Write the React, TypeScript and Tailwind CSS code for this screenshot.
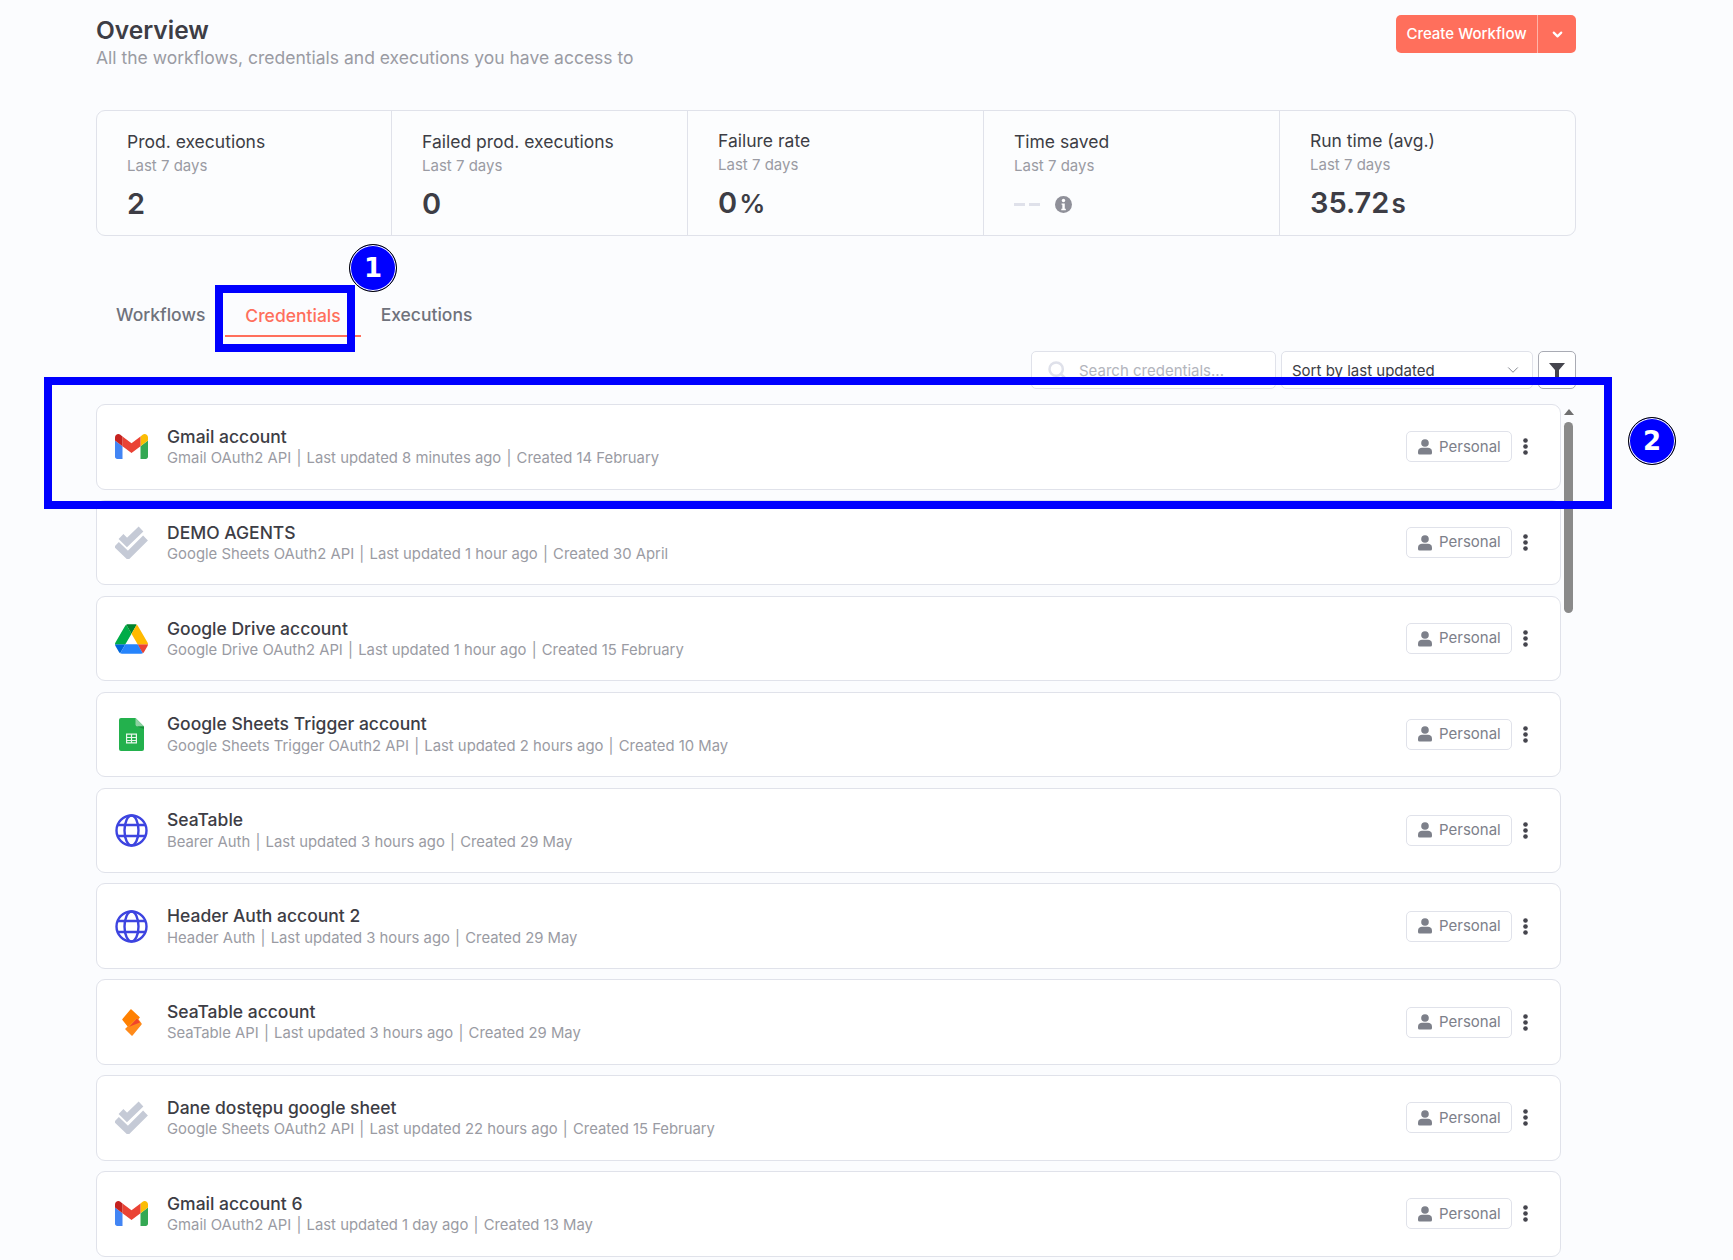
import { ChevronDown, Search } from "lucide-react";

const stats = [
    { label: "Prod. executions", value: "2" },
    { label: "Failed prod. executions", value: "0" },
    { label: "Failure rate", value: "0", unit: "%" },
    { label: "Time saved", value: "" },
    { label: "Run time (avg.)", value: "35.72", unit: "s" },
];

const credentials = [
    { name: "Gmail account", icon: "gmail", meta: "Gmail OAuth2 API", updated: "Last updated 8 minutes ago", created: "Created 14 February" },
    { name: "DEMO AGENTS", icon: "check", meta: "Google Sheets OAuth2 API", updated: "Last updated 1 hour ago", created: "Created 30 April" },
    { name: "Google Drive account", icon: "drive", meta: "Google Drive OAuth2 API", updated: "Last updated 1 hour ago", created: "Created 15 February" },
    { name: "Google Sheets Trigger account", icon: "sheets", meta: "Google Sheets Trigger OAuth2 API", updated: "Last updated 2 hours ago", created: "Created 10 May" },
    { name: "SeaTable", icon: "globe", meta: "Bearer Auth", updated: "Last updated 3 hours ago", created: "Created 29 May" },
    { name: "Header Auth account 2", icon: "globe", meta: "Header Auth", updated: "Last updated 3 hours ago", created: "Created 29 May" },
    { name: "SeaTable account", icon: "seatable", meta: "SeaTable API", updated: "Last updated 3 hours ago", created: "Created 29 May" },
    { name: "Dane dostępu google sheet", icon: "check", meta: "Google Sheets OAuth2 API", updated: "Last updated 22 hours ago", created: "Created 15 February" },
    { name: "Gmail account 6", icon: "gmail", meta: "Gmail OAuth2 API", updated: "Last updated 1 day ago", created: "Created 13 May" },
];

function CredentialIcon({ type }: { type: string }) {
    if (type === "gmail") {
        return (
            <svg viewBox="52 42 88 66" className="w-[33px] h-[25px]">
                <path fill="#4285f4" d="M58 108h14V74L52 59v43c0 3.32 2.69 6 6 6" />
                <path fill="#34a853" d="M120 108h14c3.32 0 6-2.69 6-6V59l-20 15" />
                <path fill="#fbbc04" d="M120 48v26l20-15v-8c0-7.42-8.47-11.65-14.4-7.2" />
                <path fill="#ea4335" d="M72 74V48l24 18 24-18v26L96 92" />
                <path fill="#c5221f" d="M52 51v8l20 15V48l-5.6-4.2c-5.94-4.45-14.4-.22-14.4 7.2" />
            </svg>
        );
    }
    if (type === "drive") {
        return (
            <svg viewBox="0 0 87.3 78" className="w-[33px] h-[30px]">
                <path d="m6.6 66.85 3.85 6.65c.8 1.4 1.95 2.5 3.3 3.3l13.75-23.8h-27.5c0 1.55.4 3.1 1.2 4.5z" fill="#0066da" />
                <path d="m43.65 25-13.75-23.8c-1.35.8-2.5 1.9-3.3 3.3l-25.4 44a9.06 9.06 0 0 0 -1.2 4.5h27.5z" fill="#00ac47" />
                <path d="m73.55 76.8c1.35-.8 2.5-1.9 3.3-3.3l1.6-2.75 7.65-13.25c.8-1.4 1.2-2.95 1.2-4.5h-27.502l5.852 11.5z" fill="#ea4335" />
                <path d="m43.65 25 13.75-23.8c-1.35-.8-2.9-1.2-4.5-1.2h-18.5c-1.6 0-3.15.45-4.5 1.2z" fill="#00832d" />
                <path d="m59.8 53h-32.3l-13.75 23.8c1.35.8 2.9 1.2 4.5 1.2h50.8c1.6 0 3.15-.45 4.5-1.2z" fill="#2684fc" />
                <path d="m73.4 26.5-12.7-22c-.8-1.4-1.95-2.5-3.3-3.3l-13.75 23.8 16.15 28h27.45c0-1.55-.4-3.1-1.2-4.5z" fill="#ffba00" />
            </svg>
        );
    }
    if (type === "sheets") {
        return (
            <svg viewBox="0 0 25 33" className="w-[25px] h-[33px]">
                <path fill="#23b14d" d="M2 0h14.5L25 8.5V31a2 2 0 0 1-2 2H2a2 2 0 0 1-2-2V2a2 2 0 0 1 2-2z" />
                <path fill="#8ed1a2" d="M16.5 0 25 8.5h-6.5a2 2 0 0 1-2-2z" />
                <path fill="#16903a" d="M18 8.5 25 11V8.5z" />
                <path fill="#e8f6ec" fillRule="evenodd" d="M7 15.5h11v10H7zM8.2 16.8v2.2h3.7v-2.2zm4.9 0v2.2h3.7v-2.2zm-4.9 3.3v1.9h3.7v-1.9zm4.9 0v1.9h3.7v-1.9zm-4.9 3v1.2h3.7v-1.2zm4.9 0v1.2h3.7v-1.2z" />
            </svg>
        );
    }
    if (type === "globe") {
        return (
            <svg viewBox="0 0 33 33" className="w-[33px] h-[33px]" fill="none" stroke="#3d44e0" strokeWidth="2.4">
                <circle cx="16.5" cy="16.5" r="15" />
                <ellipse cx="16.5" cy="16.5" rx="7" ry="15" />
                <path d="M2.5 11h28M2.5 22h28" />
            </svg>
        );
    }
    if (type === "seatable") {
        return (
            <svg viewBox="0 0 20 27" className="w-[20px] h-[27px]" strokeLinejoin="round">
                <path fill="#ff8000" stroke="#ff8000" strokeWidth="1.5" d="M9 1 17 8.5 7 18 1 10.5z" />
                <path fill="#ff8a1a" stroke="#ff8a1a" strokeWidth="1.5" d="M15 9.5 19 15 10 26 4 20z" />
                <path fill="#f0452b" d="M7 18 15 9.5 18 13.5 9 17z" />
            </svg>
        );
    }
    return (
        <svg viewBox="0 0 33 33" className="w-[33px] h-[33px]" fill="none" stroke="#c5cad6" strokeWidth="6.8">
            <path d="M6 10.5 12 16.5 26 3" />
            <path d="M1.5 18.5 13 29.5 30.5 12" />
        </svg>
    );
}

function Badge({ n, className }: { n: number; className: string }) {
    return (
        <div className={"absolute flex w-12 h-12 pt-[1px] items-center justify-center rounded-full bg-[#0000ff] border border-black shadow-[inset_0_0_0_1px_#ffffff] text-white text-[26px] font-bold font-['DejaVu_Sans',sans-serif] " + className}>
            {n}
        </div>
    );
}

export default function App() {
    return (
        <div className="relative h-[1260px] overflow-hidden bg-[#fbfcfe] font-['Inter',sans-serif]">
            <div className="w-[1480px] ml-[96px] pt-[15px]">
                <div className="flex justify-between h-[95px]">
                    <div>
                        <h1 className="text-[24.5px] leading-[30px] font-semibold text-[#3d3d45]">Overview</h1>
                        <p className="text-[17.5px] leading-[28px] text-[#9a9ba3] -mt-[1px]">All the workflows, credentials and executions you have access to</p>
                    </div>
                    <div className="flex h-[38px] w-[180px] rounded-[5px] bg-[#ff6f5c] text-white">
                        <span className="flex w-[142px] items-center justify-center text-[15px] font-medium border-r border-[#ffb3a8]">Create Workflow</span>
                        <span className="flex flex-1 items-center justify-center">
                            <ChevronDown size={15} strokeWidth={3.5} />
                        </span>
                    </div>
                </div>

                <div className="grid grid-cols-[295px_296px_296px_296px_1fr] h-[126px] rounded-[9px] border border-[#e0e2ea] bg-[#fcfdfe]">
                    {stats.map((s, i) => (
                        <div key={s.label} className={(i === 2 || i === 4 ? "pt-[18px]" : "pt-[19px]") + (i === 4 ? " pl-[30px]" : " pl-[30px] border-r border-[#e0e2ea]")}>
                            <div className="text-[17.5px] leading-[24px] text-[#3d3d45]">{s.label}</div>
                            <div className="text-[15px] leading-[20px] mt-[2px] text-[#9a9ba3]">Last 7 days</div>
                            {s.value ? (
                                <div className="mt-[9px] text-[29px] leading-[38px] font-semibold text-[#3d3d45]">
                                    {s.value}
                                    {s.unit && <span className="ml-[2px] text-[26px]">{s.unit}</span>}
                                </div>
                            ) : (
                                <div className="mt-[9px] h-[38px] flex items-center">
                                    <span className="w-[11px] h-[3px] bg-[#dfe1ea]" />
                                    <span className="ml-[4px] w-[11px] h-[3px] bg-[#dfe1ea]" />
                                    <svg viewBox="0 0 16 16" className="ml-[15px] w-[17px] h-[17px]">
                                        <circle cx="8" cy="8" r="8" fill="#8f9099" />
                                        <circle cx="8" cy="4.3" r="1.6" fill="#fff" />
                                        <path d="M6.2 7h3v5H10.2v1.3H5.9V12h1V8.3H6.2z" fill="#fff" />
                                    </svg>
                                </div>
                            )}
                        </div>
                    ))}
                </div>

                <div className="flex mt-[64px] h-[37px] text-[17.5px] font-medium text-[#6f727c]">
                    <span className="px-[20px] leading-[30px]">Workflows</span>
                    <span className="px-[20px] leading-[32px] h-[37px] border-b-2 border-[#ff6f5c] text-[#ff6f5c]">Credentials</span>
                    <span className="px-[20px] leading-[30px]">Executions</span>
                </div>

                <div className="flex justify-end mt-[14px] h-[38px] gap-[6px]">
                    <div className="flex items-center w-[245px] rounded-[5px] border border-[#e0e2ea] bg-white pl-[15px]">
                        <Search size={20} className="text-[#dfe1ea]" strokeWidth={3} />
                        <span className="ml-[12px] pt-[3px] text-[15px] text-[#b3b5bd]">Search credentials...</span>
                    </div>
                    <div className="flex items-center justify-between -ml-[1px] w-[252px] rounded-[5px] border border-[#e0e2ea] bg-white px-[10px]">
                        <span className="pt-[3px] text-[15px] text-[#3d3d45]">Sort by last updated</span>
                        <ChevronDown size={18} strokeWidth={1.2} className="text-[#777a84]" />
                    </div>
                    <div className="flex items-center justify-center -ml-[1px] w-[38px] rounded-[5px] border border-[#a9abb4] bg-white">
                        <svg viewBox="0 0 16 16" className="w-[16px] h-[16px]" fill="#45454d">
                            <path d="M0 1h16L10 8v8H6V8z" />
                        </svg>
                    </div>
                </div>

                <div className="flex mt-[15px]">
                    <div className="flex flex-col w-[1465px] gap-[10.4px]">
                        {credentials.map((c, i) => (
                            <div key={i} className="flex items-center h-[85.5px] shrink-0 rounded-[9px] border border-[#e0e2ea] bg-white pl-[18px] pr-[32px]">
                                <div className="flex w-[33px] justify-center">
                                    <CredentialIcon type={c.icon} />
                                </div>
                                <div className="ml-[19px] flex-1 pt-[1.4px]">
                                    <div className="text-[17.5px] leading-[21px] font-medium text-[#3d3d45]">{c.name}</div>
                                    <div className="mt-[0.3px] text-[14.85px] leading-[22px] text-[#9a9ba3]">
                                        {c.meta} <span className="mx-[1px]">|</span> {c.updated} <span className="mx-[1px]">|</span> {c.created}
                                    </div>
                                </div>
                                <div className="flex items-center h-[31px] w-[106px] rounded-[5px] border border-[#e0e2ea] pl-[11px] text-[15px] text-[#7d808a]">
                                    <svg viewBox="0 0 14 16" className="w-[14px] h-[16px]" fill="#7d808a">
                                        <circle cx="7" cy="4" r="3.8" />
                                        <path d="M0 14v-1.5C0 10 2 8.8 4 8.8h6c2 0 4 1.2 4 3.7V14a1.6 1.6 0 0 1-1.6 1.6H1.6A1.6 1.6 0 0 1 0 14z" />
                                    </svg>
                                    <span className="ml-[7px]">Personal</span>
                                </div>
                                <svg viewBox="0 0 5 17" className="ml-[11px] w-[5px] h-[17px]" fill="#45454d">
                                    <circle cx="2.5" cy="2.5" r="2.3" />
                                    <circle cx="2.5" cy="8.5" r="2.3" />
                                    <circle cx="2.5" cy="14.5" r="2.3" />
                                </svg>
                            </div>
                        ))}
                    </div>
                    <div className="flex flex-col items-center w-[15px] pt-[5px]">
                        <svg viewBox="0 0 10 6" className="w-[10px] h-[6px]" fill="#6f6f6f">
                            <path d="M5 0l5 6H0z" />
                        </svg>
                        <div className="mt-[7px] w-[9px] h-[191px] rounded-full bg-[#8a8a8a]" />
                    </div>
                </div>
            </div>

            <div className="absolute left-[215px] top-[285px] w-[140px] h-[67px] border-[8px] border-[#0000ff]" />
            <div className="absolute left-[44px] top-[377px] w-[1568px] h-[132px] border-[8px] border-[#0000ff]" />
            <Badge n={1} className="left-[349px] top-[244px]" />
            <Badge n={2} className="left-[1628px] top-[417px]" />
        </div>
    );
}
